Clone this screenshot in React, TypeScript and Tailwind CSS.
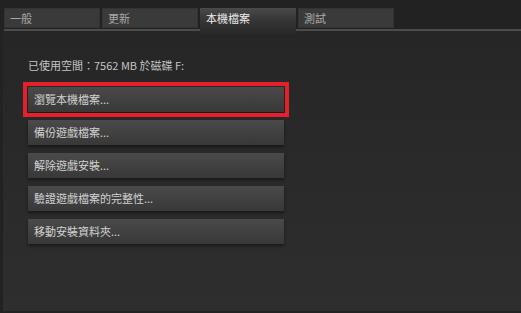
const font = { fontFamily: '"Noto Sans CJK TC", "Noto Sans", sans-serif' }

const tabs = ["一般", "更新", "本機檔案", "測試"]
const actions = [
  "瀏覽本機檔案...",
  "備份遊戲檔案...",
  "解除遊戲安裝...",
  "驗證遊戲檔案的完整性...",
  "移動安裝資料夾...",
]

export default function App() {
  return (
    <div className="w-[521px] h-[313px] overflow-hidden bg-[#222222] pt-[8px]" style={font}>
      <div className="ml-[4px] flex items-start gap-[2px] h-[23px] border-b-2 border-[#4c4c4c]">
        {tabs.map((t, i) =>
          i === 2 ? (
            <div
              key={t}
              className="relative z-10 w-[96px] h-[25px] bg-gradient-to-b from-[#4a4a4a] via-[#353535] to-[#292929] pl-[6px] pt-[3px] text-[11px] leading-[14px] text-[#ececec]"
            >
              {t}
            </div>
          ) : (
            <div
              key={t}
              className="w-[96px] h-[20px] bg-[#3a3a3a] border border-[#333] pl-[5px] pt-[2px] text-[11px] leading-[14px] text-[#a8a8a8]"
            >
              {t}
            </div>
          )
        )}
      </div>
      <div className="ml-[3px] h-[280px] bg-gradient-to-b from-[#262626] to-[#2e2e2e] pl-[25px] pt-[27px]">
        <p className="text-[11px] leading-[14px] text-[#c4c4c4]">已使用空間：7562 MB 於磁碟 F:</p>
        <div className="mt-[15px] flex flex-col gap-[8px] w-[256px]">
          {actions.map((a, i) => (
            <div
              key={a}
              className={`h-[25px] flex items-center px-[6px] bg-gradient-to-b from-[#4a4a4a] to-[#383838] shadow-[0_2px_3px_rgba(0,0,0,0.45)] text-[11px] text-[#d2d2d2] ${
                i === 0 ? "outline-4 outline-offset-[1px] outline-[#e3202c] shadow-[0_0_7px_3px_rgba(227,32,44,0.5)]" : ""
              }`}
            >
              {a}
            </div>
          ))}
        </div>
      </div>
    </div>
  )
}
